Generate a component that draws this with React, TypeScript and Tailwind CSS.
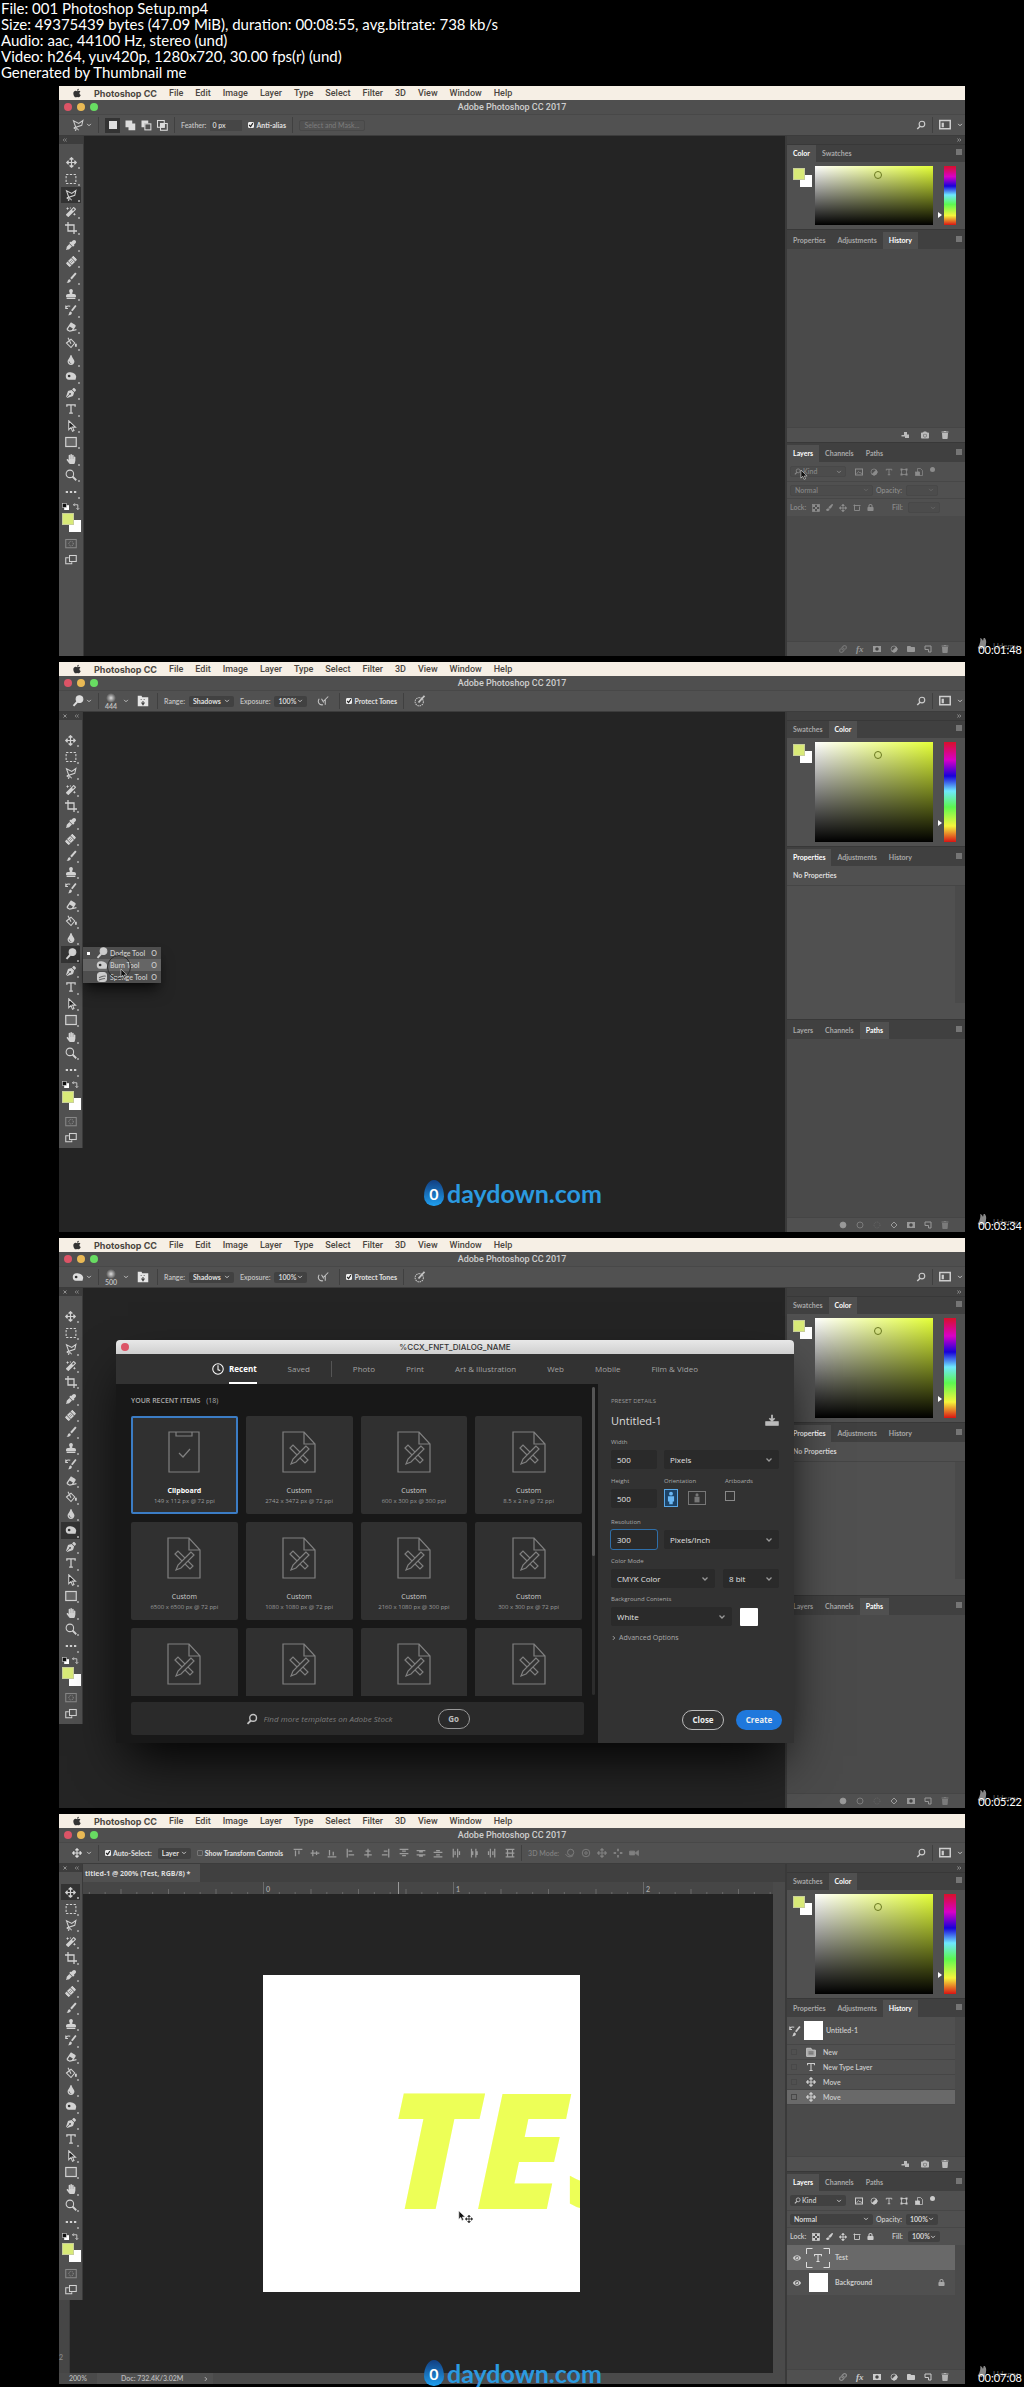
import type { ReactNode } from "react";
import clsx from "clsx";
import {
  FaApple, FaArrowsAlt, FaBandAid, FaCamera, FaEraser, FaEye, FaEyeDropper, FaFolder,
  FaHandPaper, FaLink, FaLock, FaMagic, FaPaintBrush, FaPenNib, FaStamp, FaTint, FaTrash,
} from "react-icons/fa";

type ToolId =
  | "move" | "marquee" | "lasso" | "wand" | "crop" | "eyedropper" | "heal" | "brush" | "stamp" | "history"
  | "eraser" | "bucket" | "blur" | "burn" | "dodge" | "pen" | "type" | "path" | "rect" | "hand" | "zoom" | "more";

const menus = ["File", "Edit", "Image", "Layer", "Type", "Select", "Filter", "3D", "View", "Window", "Help"];

const fileInfo = [
  "File: 001 Photoshop Setup.mp4",
  "Size: 49375439 bytes (47.09 MiB), duration: 00:08:55, avg.bitrate: 738 kb/s",
  "Audio: aac, 44100 Hz, stereo (und)",
  "Video: h264, yuv420p, 1280x720, 30.00 fps(r) (und)",
  "Generated by Thumbnail me",
];

const presets = [
  "149 x 112 px @ 72 ppi", "2742 x 3472 px @ 72 ppi", "600 x 300 px @ 300 ppi", "8.5 x 2 in @ 72 ppi",
  "6500 x 6500 px @ 72 ppi", "1080 x 1080 px @ 72 ppi", "2160 x 1080 px @ 300 ppi", "300 x 300 px @ 72 ppi",
];

function Svg({ children, className = "size-3" }: { children: ReactNode; className?: string }) {
  return (
    <svg viewBox="0 0 16 16" className={clsx("shrink-0", className)} fill="none" stroke="currentColor" strokeWidth="1.4" aria-hidden="true">
      {children}
    </svg>
  );
}

function Lasso() {
  return <Svg><path d="M2 2.5 5 11l8-2.5L14.5 2 9 6 2 2.5ZM5 11c-2.5-.5-3 2-1 2s2 1.500 0 2.500M5 11l4 4" /></Svg>;
}

function TypeT({ className = "size-3" }: { className?: string }) {
  return <Svg className={className}><path d="M2.500 5V2.500h11V5M8 2.500v11M5.500 13.500h5" strokeWidth="1.7" /></Svg>;
}

function Lens({ className = "size-3" }: { className?: string }) {
  return <Svg className={className}><circle cx="9.500" cy="6.500" r="4.500" strokeWidth="1.8" /><path d="M6.500 10 2 14.500" strokeWidth="2.4" /></Svg>;
}

function Dodge() {
  return <Svg><circle cx="10" cy="5.500" r="4.500" fill="currentColor" /><path d="M7 9 2 14.500" strokeWidth="2.5" /></Svg>;
}

function Burn() {
  return (
    <Svg>
      <path d="M1 8c0-3 2-5 5-5 4 0 8 1.500 9 6l-1 4H5c-2.500 0-4-2-4-5Z" fill="currentColor" stroke="none" />
      <circle cx="5.500" cy="8" r="1.8" fill="#333" stroke="none" />
    </Svg>
  );
}

function Sponge() {
  return <Svg><rect x="2" y="2" width="12" height="12" rx="4" fill="currentColor" /><path d="M4 9c3-1 6-3 9-2M4 12c3-1 5-2 8-2" stroke="#666" /></Svg>;
}

function Chevron({ className = "size-2" }: { className?: string }) {
  return <Svg className={className}><path d="m3 5 5 5 5-5" strokeWidth="2.5" /></Svg>;
}

function ToolIcon({ id }: { id: ToolId }) {
  switch (id) {
    case "move": return <FaArrowsAlt className="size-[11px]" />;
    case "marquee": return <Svg><rect x="1.500" y="2" width="13" height="12" strokeDasharray="3 2" /></Svg>;
    case "lasso": return <Lasso />;
    case "wand": return <FaMagic className="size-2.5" />;
    case "crop": return <Svg><path d="M4 0v12h12M0 4h12v12" strokeWidth="1.7" /></Svg>;
    case "eyedropper": return <FaEyeDropper className="size-2.5" />;
    case "heal": return <FaBandAid className="size-[11px] -rotate-45" />;
    case "brush": return <Svg><path d="M14.500 1.500 8 9" strokeWidth="2.6" /><path d="M2 14.500c2-1 1-4 3.500-5 2 0 3 2 1.500 3.500-1 1.200-3 1.500-5 1.500Z" fill="currentColor" stroke="none" /></Svg>;
    case "stamp": return <FaStamp className="size-2.5" />;
    case "history": return <Svg><path d="M14.500 2 9 9" strokeWidth="2.4" /><path d="M4 15c2-1 1-4 3-5 2 0 3 2 1.500 3.500C7.500 14.500 6 15 4 15Z" fill="currentColor" stroke="none" /><path d="M1 6c0-3 3-4 6-3M1 2v4h3" /></Svg>;
    case "eraser": return <FaEraser className="size-2.5 -rotate-12" />;
    case "bucket": return <Svg><path d="m2 8 6-5 5 5-5 6-6-6ZM4 1l4 8" /><path d="M14.500 9v4" strokeWidth="2.5" /></Svg>;
    case "blur": return <FaTint className="size-2.5" />;
    case "burn": return <Burn />;
    case "dodge": return <Dodge />;
    case "pen": return <FaPenNib className="size-2.5" />;
    case "type": return <TypeT />;
    case "path": return <Svg><path d="M5 1v12l3-3 2 5 2-1-2-4.500h4L5 1Z" fill="#222" /></Svg>;
    case "rect": return <Svg><rect x="1" y="2" width="14" height="12" fill="#666" strokeWidth="1.6" /></Svg>;
    case "hand": return <FaHandPaper className="size-2.5" />;
    case "zoom": return <Svg><circle cx="6.500" cy="6.500" r="5" /><path d="m10 10 5 5" strokeWidth="2.4" /></Svg>;
    default: return <Svg><path d="M1 8h3M6.500 8h3M12 8h3" strokeWidth="2.6" /></Svg>;
  }
}

function Swatches() {
  return (
    <div className="relative size-[19px] shrink-0">
      <span className="absolute right-0 bottom-0 size-3 bg-white" />
      <span className="absolute top-0 left-0 size-3 border border-[#c9cf9a] bg-[#d9ea78]" />
    </div>
  );
}

function Toolbar({ active, slot, className, floating }: { active: ToolId; slot: ToolId; className: string; floating?: boolean }) {
  const tools: ToolId[] = [
    "move", "marquee", "lasso", "wand", "crop", "eyedropper", "heal", "brush", "stamp", "history",
    "eraser", "bucket", "blur", slot, "pen", "type", "path", "rect", "hand", "zoom", "more",
  ];
  return (
    <aside className={clsx("flex shrink-0 flex-col border-r border-[#3a3a3a] bg-[#505050] text-[#d2d2d2]", className)}>
      <div className="flex h-2 shrink-0 items-center gap-2 bg-[#3d3d3d] px-1 text-[#aaa]">
        {floating && <Svg className="size-1"><path d="m2 2 12 12M14 2 2 14" strokeWidth="3" /></Svg>}
        <Svg className="size-1"><path d="M6 2 1 8l5 6M14 2 9 8l5 6" strokeWidth="2.5" /></Svg>
      </div>
      <div className={clsx("flex h-[346px] shrink-0 flex-col px-0.5", floating ? "mt-3" : "mt-2.5")}>
        {tools.map(t => (
          <button key={t} aria-label={t} className={clsx("relative flex flex-1 items-center justify-center", t === active && "bg-[#333]")}>
            <ToolIcon id={t} />
            <span className="absolute right-px bottom-px size-0.5 bg-[#999]" />
          </button>
        ))}
      </div>
      <div className="flex h-[13px] shrink-0 items-center justify-between px-[3px]">
        <Svg className="size-[7px]"><rect x="5" y="5" width="11" height="11" fill="#fff" stroke="none" /><rect x="1" y="1" width="9" height="9" fill="#111" stroke="#ccc" /></Svg>
        <Svg className="size-[7px]"><path d="M1 4h10v11M4 1 1 4l3 3M8 12l3 3 3-3" strokeWidth="2" /></Svg>
      </div>
      <div className="pl-[3px]"><Swatches /></div>
      <div className="mt-1.5 mb-1 flex flex-col items-center gap-1">
        <Svg><rect x="1" y="2" width="14" height="11" stroke="#888" /><circle cx="8" cy="7.500" r="3" stroke="#888" strokeDasharray="1 1" /></Svg>
        <Svg><rect x="6" y="2" width="9" height="8" /><path d="M5 5H1v8h8v-2" /></Svg>
      </div>
    </aside>
  );
}

function Divider() {
  return <span className="h-4 w-px shrink-0 bg-[#404040]" />;
}

function MiniSelect({ label, value, className, dim }: { label: string; value: string; className: string; dim?: boolean }) {
  return (
    <span className={clsx("relative flex shrink-0 items-center", className)}>
      <select aria-label={label} disabled={dim} className={clsx("h-[11px] w-full appearance-none rounded-xs pl-1 opacity-100", dim ? "border border-[#484848] bg-[#4c4c4c] text-[#858585]" : "bg-[#414141] text-[#e0e0e0]")}>
        <option>{value}</option>
      </select>
      <Chevron className={clsx("pointer-events-none absolute right-1 size-1.5", dim ? "text-[#666]" : "text-[#ccc]")} />
    </span>
  );
}

function Check({ label, checked }: { label: string; checked?: boolean }) {
  return (
    <label className="flex shrink-0 items-center gap-0.5 font-bold whitespace-nowrap text-[#e0e0e0]">
      <span className="relative flex">
        <input type="checkbox" defaultChecked={checked} className="peer size-1.5 appearance-none rounded-[1px] border border-[#777] checked:border-[#eee] checked:bg-[#eee]" />
        <Svg className="pointer-events-none absolute inset-0 hidden size-1.5 text-[#222] peer-checked:block"><path d="m3 8 4 4 6-9" strokeWidth="3" /></Svg>
      </span>
      {label}
    </label>
  );
}

function SelectionOptions() {
  return (
    <>
      <span className="flex w-5 items-center justify-between text-[#ccc]"><Lasso /><Chevron className="size-1.5" /></span>
      <Divider />
      <span className="flex items-center text-[#ddd]">
        <button aria-label="New selection" className="flex h-[15px] w-[15px] items-center justify-center bg-[#333]"><span className="size-2 bg-[#ddd]" /></button>
        <button aria-label="Add" className="ml-1"><Svg><path d="M2 2h9v4h4v9H6v-4H2Z" fill="currentColor" stroke="none" /></Svg></button>
        <button aria-label="Subtract" className="ml-1"><Svg><path d="M2 2h9v4H6v5H2Z" fill="currentColor" stroke="none" /><rect x="6.500" y="6.500" width="8" height="8" /></Svg></button>
        <button aria-label="Intersect" className="ml-1"><Svg><rect x="2" y="2" width="9" height="9" /><rect x="6" y="6" width="9" height="9" /><rect x="6" y="6" width="5" height="5" fill="currentColor" /></Svg></button>
      </span>
      <Divider />
      <label className="flex items-center gap-1">Feather:<input defaultValue="0 px" className="h-[11px] w-8 bg-[#464646] px-0.5 text-[#ddd]" /></label>
      <Check label="Anti-alias" checked />
      <Divider />
      <button disabled className="h-[11px] w-[66px] rounded-xs border border-[#484848] font-normal text-[#7d7d7d]">Select and Mask...</button>
    </>
  );
}

function ToneOptions({ icon, size }: { icon: ReactNode; size: string }) {
  return (
    <>
      <span className="flex w-5 items-center justify-between"><span className="text-[#ddd]">{icon}</span><Chevron className="size-1.5" /></span>
      <Divider />
      <span className="flex w-6 items-center justify-between">
        <span className="flex flex-col items-center leading-[7px]"><span className="size-2.5 rounded-full bg-[radial-gradient(#ddd,#505050_70%)]" />{size}</span>
        <Chevron className="size-1.5" />
      </span>
      <Svg className="mx-0.5 size-3"><path d="M1 1h5l1 2h8v12H1Z" fill="#e5e5e5" stroke="none" /><path d="M5 6h1M9 6h1M8 8v5M6 10l2 3 2-3" stroke="#444" /></Svg>
      <Divider />
      <span className="flex items-center gap-1">Range:<MiniSelect label="Range" value="Shadows" className="w-[45px] font-bold" /></span>
      <span className="flex items-center gap-1">Exposure:<MiniSelect label="Exposure" value="100%" className="w-[33px]" /></span>
      <Svg className="mx-1 size-3"><path d="M3 5c-3 4 0 9 5 8M8 9l7-7M6 5l3 5M11 6v7" /></Svg>
      <Divider />
      <Check label="Protect Tones" checked />
      <Divider />
      <Svg className="mx-1 size-3"><circle cx="7" cy="9" r="5.500" strokeDasharray="2 1" /><path d="m6 10 8-9" strokeWidth="2.5" /></Svg>
    </>
  );
}

// paths of the align / distribute buttons, three to a group
const alignGroups = [
  ["M1 2h14M4 4v9M9.500 4v6", "M1 8h14M4.500 3v10M10.500 5v6", "M1 14h14M4 3v9M10 6v6"],
  ["M2 1v14M4 5h6M4 11h9", "M8 1v14M4 5h8M2 11h12", "M14 1v14M6 5h6M3 11h9"],
  ["M1 2h14M5 5h6M1 9h14M5 12h6", "M1 4h14M5 6h6M1 11h14M5 13h6", "M1 14h14M5 11h6M1 7h14M5 4h6"],
  ["M2 1v14M5 5v6M9 1v14M12 5v6", "M4 1v14M6 5v6M11 1v14M13 5v6", "M14 1v14M11 5v6M7 1v14M4 5v6"],
];

function MoveOptions() {
  return (
    <>
      <span className="flex w-5 items-center justify-between"><FaArrowsAlt className="size-2.5 text-[#ddd]" /><Chevron className="size-1.5" /></span>
      <Divider />
      <Check label="Auto-Select:" checked />
      <MiniSelect label="Auto-Select target" value="Layer" className="w-[33px] font-bold" />
      <Check label="Show Transform Controls" />
      <span className="flex items-center gap-[9px] pl-1 text-[#9c9c9c]">
        {alignGroups.map((group, i) => (
          <span key={i} className="flex gap-[7px]">
            {group.map(d => <Svg key={d} className="size-2.5"><path d={d} strokeWidth="2" /></Svg>)}
          </span>
        ))}
        <Svg className="size-2.5"><path d="M4 1v14M12 1v14M1 2h14M1 8h14M1 14h14" strokeWidth="2" /></Svg>
      </span>
      <Divider />
      <span className="flex items-center gap-1.5 text-[#808080]">
        3D Mode:
        <Svg className="size-2.5"><circle cx="9" cy="7" r="5" /><path d="M1 10c3 5 8 5 12 2" /></Svg>
        <Svg className="size-2.5"><circle cx="8" cy="8" r="6" /><circle cx="8" cy="8" r="2" /></Svg>
        <FaArrowsAlt className="size-2.5" />
        <Svg className="size-2.5"><path d="M8 1v4M8 11v4M1 8h4M11 8h4" strokeWidth="3" /></Svg>
        <Svg className="size-2.5"><path d="M1 5h8v6H1ZM15 4v8l-5-4Z" fill="currentColor" /></Svg>
      </span>
    </>
  );
}

function Tabs({ names, active, className = "h-5" }: { names: string[]; active: string; className?: string }) {
  return (
    <div role="tablist" className={clsx("flex shrink-0 items-end border-t border-[#383838] bg-[#404040] font-bold", className)}>
      {names.map(n => (
        <button key={n} role="tab" aria-selected={n === active} className={clsx("h-[17px] px-1.5", n === active ? "bg-[#505050] text-white" : "text-[#a8a8a8]")}>{n}</button>
      ))}
      <Svg className="mr-0.5 mb-1.5 ml-auto size-2 text-[#aaa]"><path d="M2 4h12M2 8h12M2 12h12" strokeWidth="2" /></Svg>
    </div>
  );
}

function ColorPanel({ short }: { short?: boolean }) {
  return (
    <>
      <div className="flex h-2 shrink-0 items-center justify-end bg-[#404040] pr-1 text-[#bbb]">
        <Svg className="size-1"><path d="m2 2 5 6-5 6M10 2l5 6-5 6" strokeWidth="2.5" /></Svg>
      </div>
      <Tabs names={short ? ["Color", "Swatches"] : ["Swatches", "Color"]} active="Color" className="h-[18px]" />
      <div className={clsx("flex shrink-0 gap-[3px] py-1 pr-[9px] pl-1.5", short ? "h-[67px]" : "h-[108px]")}>
        <div className="pt-0.5"><Swatches /></div>
        <div className="relative flex-1 bg-[linear-gradient(to_top,#000,transparent),linear-gradient(to_right,#fff,#e4ff38)]">
          <span className={clsx("absolute left-1/2 size-2 rounded-full border border-[#6b7a20]", short ? "top-[5px]" : "top-[9px]")} />
        </div>
        <div className="relative ml-2 w-3 bg-[linear-gradient(to_bottom,#d8102a,#d800c8_18%,#1800d8_34%,#6fe8ff_49%,#5cf850_65%,#f5f53c_84%,#d81414)]">
          <span className="absolute top-[78%] -left-1.5 border-y-[3px] border-l-4 border-y-transparent border-l-white" />
        </div>
      </div>
    </>
  );
}

function FootBar({ children, className }: { children: ReactNode; className?: string }) {
  return <div className={clsx("flex h-[15px] shrink-0 items-center justify-end border-t border-[#454545] bg-[#505050] pr-4", className)}>{children}</div>;
}

function NewSheet() {
  return <Svg className="size-2"><path d="M2 2h12v12H9V9H2Z" strokeWidth="2" /></Svg>;
}

function MaskIcon() {
  return <Svg className="size-2"><rect x="0" y="2" width="16" height="12" fill="currentColor" stroke="none" /><circle cx="8" cy="8" r="3.500" fill="#444" stroke="none" /></Svg>;
}

function AdjustIcon() {
  return <Svg className="size-2"><circle cx="8" cy="8" r="6" /><path d="M12.500 4A6 6 0 0 1 4 12.500Z" fill="currentColor" /></Svg>;
}

function HistoryFoot() {
  return (
    <FootBar className="gap-3 text-[#bbb]">
      <Svg className="size-2"><path d="M6 2h6v5h4v7H8v-3H1V8h5Z" fill="currentColor" stroke="none" /></Svg>
      <FaCamera className="size-2" />
      <FaTrash className="size-2" />
    </FootBar>
  );
}

function LayersFoot({ live }: { live?: boolean }) {
  return (
    <FootBar className={clsx("gap-[9px]", live ? "text-[#ccc]" : "text-[#999]")}>
      <FaLink className="size-2 opacity-50" />
      <span className="w-2 font-['Liberation_Serif',serif] text-[9px] leading-none italic">fx</span>
      <MaskIcon />
      <AdjustIcon />
      <FaFolder className="size-2" />
      <NewSheet />
      <FaTrash className="size-2 opacity-80" />
    </FootBar>
  );
}

function PathsFoot() {
  return (
    <FootBar className="gap-[9px] text-[#999]">
      <Svg className="size-2"><circle cx="8" cy="8" r="6" fill="currentColor" /></Svg>
      <Svg className="size-2 opacity-60"><circle cx="8" cy="8" r="6" strokeWidth="2" /></Svg>
      <Svg className="size-2 opacity-40"><circle cx="8" cy="8" r="6" strokeDasharray="2 2" /></Svg>
      <Svg className="size-2"><path d="m8 2 6 6-6 6-6-6Z" strokeWidth="2" /></Svg>
      <MaskIcon />
      <NewSheet />
      <FaTrash className="size-2 opacity-60" />
    </FootBar>
  );
}

function LayerControls({ live }: { live?: boolean }) {
  const tone = live ? "text-[#ccc]" : "text-[#8c8c8c]";
  return (
    <div className={clsx("shrink-0", tone)}>
      <div className="flex h-5 items-center gap-[7px] border-b border-[#474747] pl-[3px]">
        <span className="relative mr-0.5 flex items-center">
          <Lens className="pointer-events-none absolute left-1 size-[7px]" />
          <select aria-label="Filter kind" disabled={!live} className={clsx("h-[11px] w-14 appearance-none rounded-xs pl-3 opacity-100", live ? "bg-[#414141]" : "border border-[#484848] bg-[#4c4c4c] text-[#858585]")}><option>Kind</option></select>
          <Chevron className="pointer-events-none absolute right-1 size-1.5" />
        </span>
        <Svg className="size-2"><rect x="1" y="2" width="14" height="12" strokeWidth="2" /><path d="m3 12 4-5 3 3 2-1 2 3" /></Svg>
        <AdjustIcon />
        <TypeT className="size-2" />
        <Svg className="size-2"><rect x="3" y="3" width="10" height="10" strokeWidth="1.5" /><path d="M1 3h4M11 3h4M1 13h4M11 13h4" strokeWidth="4" /></Svg>
        <Svg className="size-2"><path d="M5 1h6l4 4v10H8V8H5Z" /><rect x="1" y="8" width="8" height="7" fill="currentColor" /></Svg>
        <span className="mb-1 size-[5px] rounded-full bg-current" />
      </div>
      <div className="flex h-[17px] items-center gap-[3px] border-b border-[#474747] pl-[3px]">
        <MiniSelect label="Blend mode" value="Normal" className="w-[83px]" dim={!live} />
        <span className="w-[27px]">Opacity:</span>
        <MiniSelect label="Opacity" value={live ? "100%" : ""} className="w-8" dim={!live} />
      </div>
      <div className="flex h-[17px] items-center gap-1.5 pl-[3px]">
        <span className="w-4">Lock:</span>
        <Svg className="size-2"><rect x="1" y="1" width="14" height="14" /><path d="M1 1h5v5H1ZM10 1h5v5h-5ZM6 6h4v4H6ZM1 10h5v5H1ZM10 10h5v5h-5Z" fill="currentColor" stroke="none" /></Svg>
        <FaPaintBrush className="size-[7px]" />
        <FaArrowsAlt className="size-2" />
        <Svg className="size-2"><path d="M1 3h14M3 1v12h10V5" strokeWidth="1.8" /></Svg>
        <FaLock className="size-[7px]" />
        <span className="ml-3 w-2.5">Fill:</span>
        <MiniSelect label="Fill" value={live ? "100%" : ""} className="w-8" dim={!live} />
      </div>
    </div>
  );
}

function Dock({ children }: { children: ReactNode }) {
  return <aside className="flex w-[180px] shrink-0 flex-col border-l-2 border-[#3a3a3a] bg-[#505050]">{children}</aside>;
}

function PathsDock() {
  return (
    <Dock>
      <ColorPanel />
      <Tabs names={["Properties", "Adjustments", "History"]} active="Properties" />
      <p className="flex h-5 shrink-0 items-center border-b border-[#454545] px-1.5 font-bold text-[#ddd]">No Properties</p>
      <div className="flex h-[133px] shrink-0 justify-end pb-4"><span className="w-2.5 bg-[#4a4a4a]" /></div>
      <Tabs names={["Layers", "Channels", "Paths"]} active="Paths" />
      <div className="flex-1 bg-[#4a4a4a]" />
      <PathsFoot />
    </Dock>
  );
}

function HistoryRow({ icon, label, active }: { icon: ReactNode; label: string; active?: boolean }) {
  return (
    <li className={clsx("mr-2.5 flex h-[15px] items-center gap-[7px] border-b border-[#464646] pl-1 text-[#ccc]", active ? "bg-[#696969]" : "bg-[#505050]")}>
      <span className="mr-0.5 size-1.5 border border-[#484848]" />
      {icon}
      {label}
    </li>
  );
}

function EditingDock() {
  return (
    <Dock>
      <ColorPanel />
      <Tabs names={["Properties", "Adjustments", "History"]} active="History" className="h-[19px]" />
      <ul className="h-[139px] shrink-0 bg-[#4a4a4a]">
        <li className="mr-2.5 flex h-7 items-center gap-[3px] border-b border-[#464646] bg-[#505050] pl-0.5 text-[#ccc]">
          <ToolIcon id="history" />
          <span className="size-[19px] bg-white" />
          Untitled-1
        </li>
        <HistoryRow icon={<Svg className="size-2.5"><path d="M1 2h7l2 3h5v10H1Z" fill="#aaa" /><path d="M4 8h8M4 11h8" stroke="#555" /></Svg>} label="New" />
        <HistoryRow icon={<TypeT className="size-2.5" />} label="New Type Layer" />
        <HistoryRow icon={<FaArrowsAlt className="size-2.5" />} label="Move" />
        <HistoryRow icon={<FaArrowsAlt className="size-2.5" />} label="Move" active />
      </ul>
      <HistoryFoot />
      <Tabs names={["Layers", "Channels", "Paths"]} active="Layers" />
      <LayerControls live />
      <ul className="flex-1 bg-[#4a4a4a] font-bold text-[#ccc]">
        <li className="mr-2.5 flex h-[25px] items-center gap-[5px] bg-[#696969] pl-1.5">
          <FaEye className="size-2" />
          <span className="relative flex h-5 w-6 items-center justify-center text-[#ddd]">
            <svg viewBox="0 0 24 20" className="absolute inset-0 h-5 w-6" fill="none" stroke="currentColor" aria-hidden="true"><path d="M.5 6V.5h6M17.500.5h6V6M23.500 14v5.500h-6M6.500 19.500h-6V14" /></svg>
            <TypeT className="size-2.5" />
          </span>
          Test
        </li>
        <li className="mr-2.5 flex h-[25px] items-center gap-[5px] bg-[#505050] pr-2.5 pl-1.5">
          <FaEye className="size-2" />
          <span className="flex w-6 justify-center"><span className="size-[19px] bg-white" /></span>
          Background
          <FaLock className="ml-auto size-[7px] opacity-70" />
        </li>
      </ul>
      <LayersFoot live />
    </Dock>
  );
}

function Frame({ time, options, children, overlay }: { time: string; options: ReactNode; children: ReactNode; overlay?: ReactNode }) {
  return (
    <figure className="relative aspect-video w-full px-[59px] pt-1.5">
      <div className="relative flex h-full flex-col bg-[#242424] font-['Lato',sans-serif] text-[7px] leading-none font-semibold text-[#c4c4c4]">
        <nav className="flex h-3.5 shrink-0 items-center gap-3 bg-[#f6efe5] pl-[13px] font-['Roboto',sans-serif] text-[9px] font-medium text-[#4a4540]">
          <FaApple className="size-2.5 text-[#333]" />
          <b className="font-['Inter',sans-serif] font-bold">Photoshop CC</b>
          {menus.map(m => <button key={m}>{m}</button>)}
        </nav>
        <div className="relative flex h-[15px] shrink-0 items-center justify-center border-b border-[#484848] bg-[#4f4f4f] font-['Roboto',sans-serif] text-[9px] font-medium text-[#d0d0d0]">
          <span className="absolute left-[5px] flex gap-[5px]">
            <span className="size-2 rounded-full bg-[#dc5466]" />
            <span className="size-2 rounded-full bg-[#e9b955]" />
            <span className="size-2 rounded-full bg-[#68dc62]" />
          </span>
          Adobe Photoshop CC 2017
        </div>
        <div className="flex h-[21px] shrink-0 items-center gap-1.5 border-b border-[#3c3c3c] bg-[#515151] pl-[13px]">
          {options}
          <span className="ml-auto flex items-center gap-1.5 pr-0.5 text-[#ccc]">
            <Lens className="size-2.5" />
            <Divider />
            <Svg className="size-3"><rect x="1" y="2" width="14" height="11" strokeWidth="2" /><path d="M5 5v6" strokeWidth="3" /></Svg>
            <Chevron className="size-1.5" />
          </span>
        </div>
        <div className="relative flex min-h-0 flex-1">{children}</div>
        {overlay}
      </div>
      <figcaption className="absolute right-0.5 bottom-0 text-right leading-none">
        <span className="absolute right-1 bottom-1.5 flex items-end gap-1 font-['Lato',sans-serif] text-[8px] text-[#666]">
          <Svg className="size-3 text-[#888]"><path d="M2 14c2-2 4-8 4-11 2 2 0 8-1 11 3-3 4-7 5-12 2 3 0 9-1 12" strokeWidth="3" /></Svg>
          Udemy
        </span>
        <time className="relative font-['Lato',sans-serif] text-[11px] leading-none text-white">{time}</time>
      </figcaption>
    </figure>
  );
}

function SiteMark({ className }: { className: string }) {
  return (
    <a href="#site" className={clsx("absolute left-[424px] flex items-center gap-[3px] font-['Lato',sans-serif] text-[25px] leading-[26px] font-bold text-[#2b9ae0]", className)}>
      <span className="flex h-[26px] w-5 items-end justify-center rounded-[50%_50%_48%_48%/64%_64%_36%_36%] bg-linear-to-b from-[#123f82] to-[#1fa0f0] pb-1 text-[16px] leading-4 text-white">0</span>
      daydown.com
    </a>
  );
}

function Pointer({ className }: { className: string }) {
  return <Svg className={clsx("pointer-events-none absolute z-10", className)}><path d="M3 0v13l3-3 2 5 2.500-1-2-4.500H13Z" fill="#111" stroke="#ddd" strokeWidth="1" /></Svg>;
}

function Flyout() {
  const items: [string, ReactNode][] = [["Dodge Tool", <Dodge />], ["Burn Tool", <Burn />], ["Sponge Tool", <Sponge />]];
  return (
    <div className="absolute top-[285px] left-6 w-[78px] bg-[#4e4e4e] text-[#ccc] shadow-lg shadow-black/60">
      {items.map(([name, icon], i) => (
        <button key={name} className={clsx("flex h-3 w-full items-center gap-0.5 px-1", i === 1 && "bg-[#656565]")}>
          <span className={clsx("mr-1 size-[3px]", i === 0 && "bg-white")} />
          {icon}
          {name}
          <span className="ml-auto">O</span>
        </button>
      ))}
      <span className="pointer-events-none absolute top-2 left-6 size-6 rounded-full border border-[#2c2c2c]" />
      <Pointer className="top-[22px] left-9 size-2.5" />
    </div>
  );
}

function PresetIcon({ clip }: { clip?: boolean }) {
  return (
    <svg viewBox="0 0 34 42" className="h-[42px] w-[34px]" fill="none" stroke="#808080" strokeWidth="1.2" aria-hidden="true">
      {clip ? (
        <path d="M2 1h30v40H2ZM9 1v4h16V1M12 22l4 4 7-8" />
      ) : (
        <>
          <path d="M1 1h21l11 12v28H1ZM22 1v12h11" />
          <path d="m10 16 15 15 3-3-15-15Z" transform="translate(-2 1)" />
          <path d="m24 15-13 13-2 5 5-2 13-13Z" fill="#323232" />
        </>
      )}
    </svg>
  );
}

function Field({ label, children, className }: { label: string; children: ReactNode; className?: string }) {
  return <label className={clsx("flex flex-col gap-1 text-[#aaa]", className)}><span className="leading-2">{label}</span>{children}</label>;
}

function BoxSelect({ label, value, className }: { label: string; value: string; className: string }) {
  return (
    <span className={clsx("relative flex items-center", className)}>
      <select aria-label={label} className="h-[19px] w-full appearance-none rounded-xs bg-[#2a2a2a] pl-1.5 text-[8px] text-[#e2e2e2]"><option>{value}</option></select>
      <Chevron className="pointer-events-none absolute right-1.5 size-2 text-[#999]" />
    </span>
  );
}

const boxInput = "h-[19px] w-[46px] rounded-xs bg-[#2a2a2a] px-1.5 text-[8px] text-[#e8e8e8]";

function NewDocDialog() {
  return (
    <div role="dialog" aria-label="New document" className="absolute top-[102px] right-[171px] left-[57px] flex h-[403px] flex-col rounded-t-sm bg-[#181818] font-['Open_Sans',sans-serif] text-[6px] font-medium shadow-2xl shadow-black">
      <div className="relative flex h-3.5 shrink-0 items-center justify-center rounded-t-sm bg-linear-to-b from-[#e8e8e8] to-[#cfcfcf] font-['Inter',sans-serif] text-[8px] text-[#333]">
        <span className="absolute left-[5px] size-2 rounded-full bg-[#dc5466]" />
        %CCX_FNFT_DIALOG_NAME
      </div>
      <nav className="flex h-[30px] shrink-0 items-center justify-center gap-[31px] bg-[#323232] text-[8px] text-[#a2a2a2]">
        <button className="relative flex h-full items-center gap-[5px] font-bold text-white">
          <Svg><circle cx="8" cy="8" r="7" /><path d="M8 3v6l3 1" /></Svg>
          Recent
          <span className="absolute right-0 bottom-0 h-0.5 w-7 bg-white" />
        </button>
        <button>Saved</button>
        <span className="-mx-2.5 h-4 w-px bg-[#555]" />
        {["Photo", "Print", "Art & Illustration", "Web", "Mobile", "Film & Video"].map(n => <button key={n}>{n}</button>)}
      </nav>
      <div className="flex min-h-0 flex-1">
        <section className="flex min-w-0 flex-1 pt-[3px] pr-[3px] pb-2 pl-[15px]">
          <div className="flex min-w-0 flex-1 flex-col">
            <h2 className="shrink-0 pt-[11px] pb-3 text-[7px] leading-1.5 font-semibold text-[#aaa]">YOUR RECENT ITEMS <span className="ml-1 font-normal">(18)</span></h2>
            <div className="mr-2.5 grid min-h-0 flex-1 auto-rows-[98px] grid-cols-4 gap-2 overflow-hidden">
              {Array.from({ length: 12 }, (_, i) => (
                <button key={i} aria-label={presets[i] ?? "Custom"} className={clsx("flex flex-col items-center rounded-xs bg-[#303030] pt-[15px]", i === 0 && "outline-2 -outline-offset-2 outline-[#3b7cc4]")}>
                  <PresetIcon clip={i === 0} />
                  {presets[i] && (
                    <>
                      <span className={clsx("mt-3.5 text-[7px] leading-2", i === 0 ? "font-bold text-white" : "text-[#ccc]")}>{i === 0 ? "Clipboard" : "Custom"}</span>
                      <span className="mt-0.5 leading-2 whitespace-nowrap text-[#9c9c9c]">{presets[i]}</span>
                    </>
                  )}
                </button>
              ))}
            </div>
            <form className="mt-1.5 mr-2 flex h-[33px] shrink-0 items-center justify-center rounded-xs bg-[#2a2a2a]">
              <Lens />
              <input aria-label="Search templates" placeholder="Find more templates on Adobe Stock" className="ml-1.5 w-[174px] text-[8px] italic placeholder:text-[#7d7d7d]" />
              <button type="button" className="h-5 w-8 rounded-full border border-[#999] text-[8px] font-bold text-[#bbb]">Go</button>
            </form>
          </div>
          <span className="mb-10 flex w-[3px] flex-col rounded-full bg-[#2c2c2c]"><span className="h-[55%] rounded-full bg-[#555]" /></span>
        </section>
        <section className="flex w-[196px] shrink-0 flex-col bg-[#323232] pt-[13px] pr-[15px] pb-[13px] pl-[13px]">
          <h3 className="leading-[9px] text-[#999]">PRESET DETAILS</h3>
          <div className="mt-1 flex h-5 items-center justify-between text-[11px] text-[#ddd]">
            Untitled-1
            <Svg className="size-3.5 text-[#bbb]"><path d="M1 10h14v4H1Z" fill="currentColor" /><path d="M8 2v7M5 6l3 3 3-3" strokeWidth="2" /></Svg>
          </div>
          <div className="mt-2 flex items-end gap-[7px]">
            <Field label="Width"><input defaultValue="500" className={boxInput} /></Field>
            <BoxSelect label="Width unit" value="Pixels" className="flex-1" />
          </div>
          <div className="mt-2 flex gap-[7px]">
            <Field label="Height"><input defaultValue="500" className={boxInput} /></Field>
            <div className="flex w-[54px] flex-col gap-1 text-[#aaa]">
              <span className="leading-2">Orientation</span>
              <span className="flex items-center gap-2.5">
                <button aria-label="Portrait" className="flex h-[18px] w-3.5 items-center justify-center border border-[#5aa7e6] bg-[#1d4468] text-[#6ab8f5]">
                  <Svg className="size-3.5"><circle cx="8" cy="3" r="2.2" fill="currentColor" stroke="none" /><path d="M4.500 6h7v6H10v3H6v-3H4.500Z" fill="currentColor" stroke="none" /></Svg>
                </button>
                <button aria-label="Landscape" className="flex h-3.5 w-[18px] items-center justify-center border border-[#777] text-[#777]">
                  <Svg className="size-2.5"><circle cx="8" cy="3" r="2.5" fill="currentColor" stroke="none" /><path d="M4 6h8v9H4Z" fill="currentColor" stroke="none" /></Svg>
                </button>
              </span>
            </div>
            <Field label="Artboards"><input type="checkbox" className="mt-0.5 size-2.5 appearance-none border border-[#888]" /></Field>
          </div>
          <div className="mt-2.5 flex items-end gap-[7px]">
            <Field label="Resolution"><input defaultValue="300" className={clsx(boxInput, "outline-1 outline-[#2f6ea8]")} /></Field>
            <BoxSelect label="Resolution unit" value="Pixels/Inch" className="flex-1" />
          </div>
          <div className="mt-2 flex items-end gap-2">
            <Field label="Color Mode" className="flex-1"><BoxSelect label="Color Mode" value="CMYK Color" className="w-full" /></Field>
            <BoxSelect label="Bit depth" value="8 bit" className="w-14" />
          </div>
          <div className="mt-[7px] flex items-end gap-2">
            <Field label="Background Contents" className="w-[121px]"><BoxSelect label="Background Contents" value="White" className="w-full" /></Field>
            <button aria-label="Background color" className="size-[18px] rounded-[1px] bg-white" />
          </div>
          <button className="mt-2 flex items-center gap-0.5 text-[7px] leading-2 text-[#aaa]"><Chevron className="size-1.5 -rotate-90" />Advanced Options</button>
          <div className="mt-auto -mr-[3px] flex justify-end gap-3 text-[8px] font-bold text-[#eee]">
            <button className="h-5 w-[42px] rounded-full border border-[#bbb]">Close</button>
            <button className="h-5 w-[46px] rounded-full bg-[#1f78dc]">Create</button>
          </div>
        </section>
      </div>
    </div>
  );
}

function Ruler() {
  // inch marks are 190px apart at this zoom, the origin sits under the page's left edge
  const ticks = Array.from({ length: 45 }, (_, i) => i);
  return (
    <div className="relative h-3 shrink-0 overflow-hidden bg-[#464646]">
      <svg className="h-3 w-full" stroke="#6a6a6a" aria-hidden="true">
        {ticks.map(i => <path key={i} d={`M${14.5 + i * 190 / 12} ${i % 12 === 0 ? 0 : i % 3 === 0 ? 7 : 10}v12`} />)}
        <path d="M339.500 0v12" stroke="#999" />
      </svg>
      <span className="absolute top-1 left-[207px] text-[#aaa]">0</span>
      <span className="absolute top-1 left-[397px] text-[#aaa]">1</span>
      <span className="absolute top-1 left-[587px] text-[#aaa]">2</span>
    </div>
  );
}

function DocumentArea() {
  return (
    <main className="flex min-w-0 flex-1 flex-col">
      <div className="flex h-[18px] shrink-0 bg-[#404040] pl-6">
        <button className="h-full bg-[#505050] pr-2.5 pl-0.5 font-['Open_Sans',sans-serif] font-bold text-[#ddd]">titled-1 @ 200% (Test, RGB/8) *</button>
      </div>
      <div className="flex min-h-0 flex-1">
        <div className="flex min-w-0 flex-1 flex-col">
          <Ruler />
          <div className="flex min-h-0 flex-1">
            <div className="flex w-[11px] shrink-0 flex-col justify-end border-r border-[#3c3c3c] bg-[#464646] pb-3 text-[#888]">2</div>
            <div className="flex flex-1 items-center justify-center">
              <div className="relative size-[317px] overflow-hidden bg-white">
                <p className="absolute top-[90px] left-[123px] font-['Open_Sans',sans-serif] text-[162px] leading-none font-extrabold text-[#edff57] italic">TEST</p>
                <Pointer className="top-[236px] left-[194px] size-2.5" />
                <FaArrowsAlt className="absolute top-[240px] left-[202px] size-2 text-[#333]" />
              </div>
            </div>
          </div>
        </div>
        <div className="w-3 shrink-0 bg-[#4a4a4a]" />
      </div>
      <footer className="flex h-[11px] shrink-0 items-center bg-[#4a4a4a] pl-2.5 text-[#bbb]">
        <span className="w-7">200%</span>
        <span className="flex h-full w-[116px] items-center justify-between bg-[#505050] px-1 pl-6">Doc: 732.4K/3.02M<Chevron className="size-1.5 -rotate-90" /></span>
      </footer>
    </main>
  );
}

export default function App() {
  return (
    <div className="bg-black pb-[3px]">
      <header className="font-['Lato',sans-serif] text-[15px] leading-4 text-white">
        {fileInfo.map(line => <p key={line} className="pl-px">{line}</p>)}
      </header>

      <Frame time="00:01:48" options={<SelectionOptions />}>
        <Toolbar active="lasso" slot="burn" className="w-[25px]" />
        <main className="flex-1" />
        <Dock>
          <ColorPanel short />
          <Tabs names={["Properties", "Adjustments", "History"]} active="History" />
          <div className="h-[178px] shrink-0 bg-[#4a4a4a]" />
          <HistoryFoot />
          <Tabs names={["Layers", "Channels", "Paths"]} active="Layers" />
          <div className="relative shrink-0"><LayerControls /><Pointer className="top-2 left-3 size-2.5" /></div>
          <div className="flex-1 bg-[#4a4a4a]" />
          <LayersFoot />
        </Dock>
      </Frame>

      <div className="relative">
        <Frame time="00:03:34" options={<ToneOptions icon={<Dodge />} size="444" />} overlay={<Flyout />}>
          <Toolbar active="dodge" slot="dodge" className="w-6 self-start" floating />
          <main className="flex-1" />
          <PathsDock />
        </Frame>
        <SiteMark className="bottom-[26px]" />
      </div>

      <Frame time="00:05:22" options={<ToneOptions icon={<Burn />} size="500" />} overlay={<NewDocDialog />}>
        <Toolbar active="burn" slot="burn" className="w-6 self-start" floating />
        <main className="flex-1" />
        <PathsDock />
      </Frame>

      <div className="relative">
        <Frame time="00:07:08" options={<MoveOptions />}>
          <DocumentArea />
          <Toolbar active="move" slot="burn" className="absolute top-0 left-0 w-6" floating />
          <EditingDock />
        </Frame>
        <SiteMark className="-bottom-0.5" />
      </div>
    </div>
  );
}
